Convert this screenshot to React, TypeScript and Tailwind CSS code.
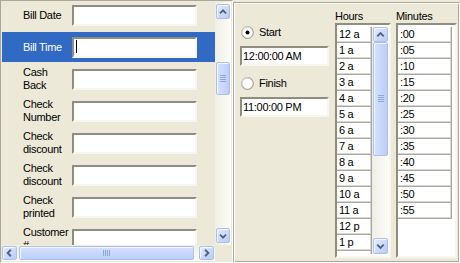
import React from "react";

const FONT = "font-['Liberation_Sans',Arial,sans-serif] tracking-[-0.3px]";

const fields: { lines: string[]; selected?: boolean }[] = [
  { lines: ["Bill Date"] },
  { lines: ["Bill Time"], selected: true },
  { lines: ["Cash", "Back"] },
  { lines: ["Check", "Number"] },
  { lines: ["Check", "discount"] },
  { lines: ["Check", "discount"] },
  { lines: ["Check", "printed"] },
  { lines: ["Customer", "#"] },
];

const hours = [
  "12 a", "1 a", "2 a", "3 a", "4 a", "5 a", "6 a", "7 a",
  "8 a", "9 a", "10 a", "11 a", "12 p", "1 p", "2 p",
];
const minutes = [":00", ":05", ":10", ":15", ":20", ":25", ":30", ":35", ":40", ":45", ":50", ":55"];

const sunken =
  "border-2 border-t-[#8f8c80] border-l-[#8f8c80] border-b-[#f7f6f1] border-r-[#f7f6f1]";

function Chevron({ dir }: { dir: "up" | "down" | "left" | "right" }) {
  const d = {
    up: "M3.5 8.5 L7 5 L10.5 8.5",
    down: "M3.5 5.5 L7 9 L10.5 5.5",
    left: "M8.5 3.5 L5 7 L8.5 10.5",
    right: "M5.5 3.5 L9 7 L5.5 10.5",
  }[dir];
  return (
    <svg width="14" height="14" viewBox="0 0 14 14">
      <path d={d} fill="none" stroke="#4d6185" strokeWidth="2" />
    </svg>
  );
}

function ScrollBtn({ dir, className = "" }: { dir: "up" | "down" | "left" | "right"; className?: string }) {
  return (
    <div
      className={`flex items-center justify-center rounded-[2px] border border-[#aac0f1] bg-gradient-to-br from-[#e3ebfe] to-[#b9ccf7] shadow-[inset_1px_1px_0_#f4f7fe] ${className}`}
    >
      <Chevron dir={dir} />
    </div>
  );
}

function Thumb({ vertical, className = "" }: { vertical: boolean; className?: string }) {
  return (
    <div
      className={`flex items-center justify-center rounded-[2px] border border-[#aac0f1] shadow-[inset_1px_1px_0_#f4f7fe] ${
        vertical ? "flex-col bg-gradient-to-r" : "flex-row bg-gradient-to-b"
      } from-[#d6e2fd] to-[#bccef8] ${className}`}
    >
      {[0, 1, 2, 3].map((i) => (
        <div
          key={i}
          className={`${vertical ? "h-[1px] w-[6px] mb-[1px]" : "w-[1px] h-[6px] mr-[1px]"} bg-[#8ba6e1]`}
        />
      ))}
    </div>
  );
}

function Radio({ checked }: { checked: boolean }) {
  return (
    <svg width="13" height="13" viewBox="0 0 13 13">
      <circle cx="6.5" cy="6.5" r="5.8" fill="#ffffff" stroke="#a8a699" strokeWidth="1.2" />
      <path d="M2.3 9.5 A5 5 0 0 1 9.5 2.3" fill="none" stroke="#d8d6cc" strokeWidth="1" />
      {checked && <circle cx="6.5" cy="6.5" r="2" fill="#000000" />}
    </svg>
  );
}

function ListItem({ text, width }: { text: string; width: string }) {
  return (
    <div
      className={`h-[16px] shrink-0 ${width} bg-white pl-[2px] leading-[14px] shadow-[inset_-1px_-1px_0_#a9a79f,inset_-2px_-2px_0_#d9d7cf]`}
    >
      {text}
    </div>
  );
}

export default function App() {
  return (
    <div className={`flex h-[263px] w-[460px] overflow-hidden bg-[#ECE9D8] text-[11px] text-black ${FONT}`}>
      {/* Field grid */}
      <div className="flex h-[263px] w-[233px] shrink-0 flex-col border border-t-[#aca899] border-l-[#aca899] border-b-white border-r-white p-[1px]">
        <div className="flex h-[243px]">
          <div className="w-[213px] overflow-hidden">
            <div className="-mt-[2px]">
              {fields.map((f, i) => (
                <div
                  key={i}
                  className={`mb-[2px] flex h-[30px] items-center ${f.selected ? "bg-[#316AC5] text-white" : ""}`}
                >
                  <div className="w-[70px] pl-[21px] leading-[13px]">
                    {f.lines.map((l, j) => (
                      <div key={j}>{l}</div>
                    ))}
                  </div>
                  <div className={`relative h-[21px] w-[125px] bg-white ${sunken}`}>
                    {f.selected && <div className="absolute left-[2px] top-[1px] h-[13px] w-[1px] bg-black" />}
                  </div>
                </div>
              ))}
            </div>
          </div>
          <div className="flex w-[16px] flex-col items-center bg-gradient-to-r from-[#efeee6] to-[#fdfdfa] py-[2px]">
            <ScrollBtn dir="up" className="h-[15px] w-[14px]" />
            <div className="h-[43px]" />
            <Thumb vertical className="h-[33px] w-[14px]" />
            <div className="flex-1" />
            <ScrollBtn dir="down" className="h-[15px] w-[14px]" />
          </div>
        </div>
        <div className="flex h-[16px]">
          <div className="flex w-[213px] items-center bg-gradient-to-b from-[#efeee6] to-[#fdfdfa]">
            <ScrollBtn dir="left" className="h-[14px] w-[15px]" />
            <div className="w-[2px]" />
            <Thumb vertical={false} className="h-[14px] w-[175px]" />
            <div className="flex-1" />
            <ScrollBtn dir="right" className="h-[14px] w-[15px]" />
            <div className="w-[1px]" />
          </div>
          <div className="w-[16px]" />
        </div>
      </div>

      {/* Time range */}
      <div className="mt-[2px] flex h-[261px] w-[227px] shrink-0 border border-t-[#aca899] border-l-[#aca899] border-b-white border-r-white pl-[6px] shadow-[inset_1px_1px_0_#ffffff,inset_-1px_-1px_0_#aca899]">
        <div className="flex w-[89px] flex-col">
          <div className="mt-[23px] flex h-[13px] items-center pl-[1px]">
            <Radio checked />
            <span className="ml-[5px]">Start</span>
          </div>
          <div className={`mt-[7px] h-[20px] w-[89px] bg-white pl-[1px] leading-[16px] ${sunken}`}>12:00:00 AM</div>
          <div className="mt-[11px] flex h-[13px] items-center pl-[1px]">
            <Radio checked={false} />
            <span className="ml-[5px]">Finish</span>
          </div>
          <div className={`mt-[7px] h-[20px] w-[89px] bg-white pl-[1px] leading-[16px] ${sunken}`}>11:00:00 PM</div>
        </div>

        <div className="ml-[6px] flex w-[56px] flex-col">
          <div className="mt-[7px] h-[13px] leading-[13px]">Hours</div>
          <div className={`h-[235px] bg-white ${sunken}`}>
            <div className="flex h-full py-[2px]">
              <div className="flex w-[35px] flex-col overflow-hidden">
                {hours.map((h) => (
                  <ListItem key={h} text={h} width="w-[35px]" />
                ))}
              </div>
              <div className="flex w-[17px] flex-col items-center bg-gradient-to-r from-[#efeee6] to-[#fdfdfa]">
                <ScrollBtn dir="up" className="h-[15px] w-[15px]" />
                <Thumb vertical className="h-[114px] w-[15px]" />
                <div className="flex-1" />
                <ScrollBtn dir="down" className="h-[16px] w-[15px]" />
              </div>
            </div>
          </div>
        </div>

        <div className="ml-[5px] flex w-[61px] flex-col">
          <div className="mt-[7px] h-[13px] leading-[13px]">Minutes</div>
          <div className={`h-[235px] bg-white ${sunken}`}>
            <div className="flex h-full flex-col py-[2px]">
              {minutes.map((m) => (
                <ListItem key={m} text={m} width="w-[54px]" />
              ))}
            </div>
          </div>
        </div>
      </div>
    </div>
  );
}
